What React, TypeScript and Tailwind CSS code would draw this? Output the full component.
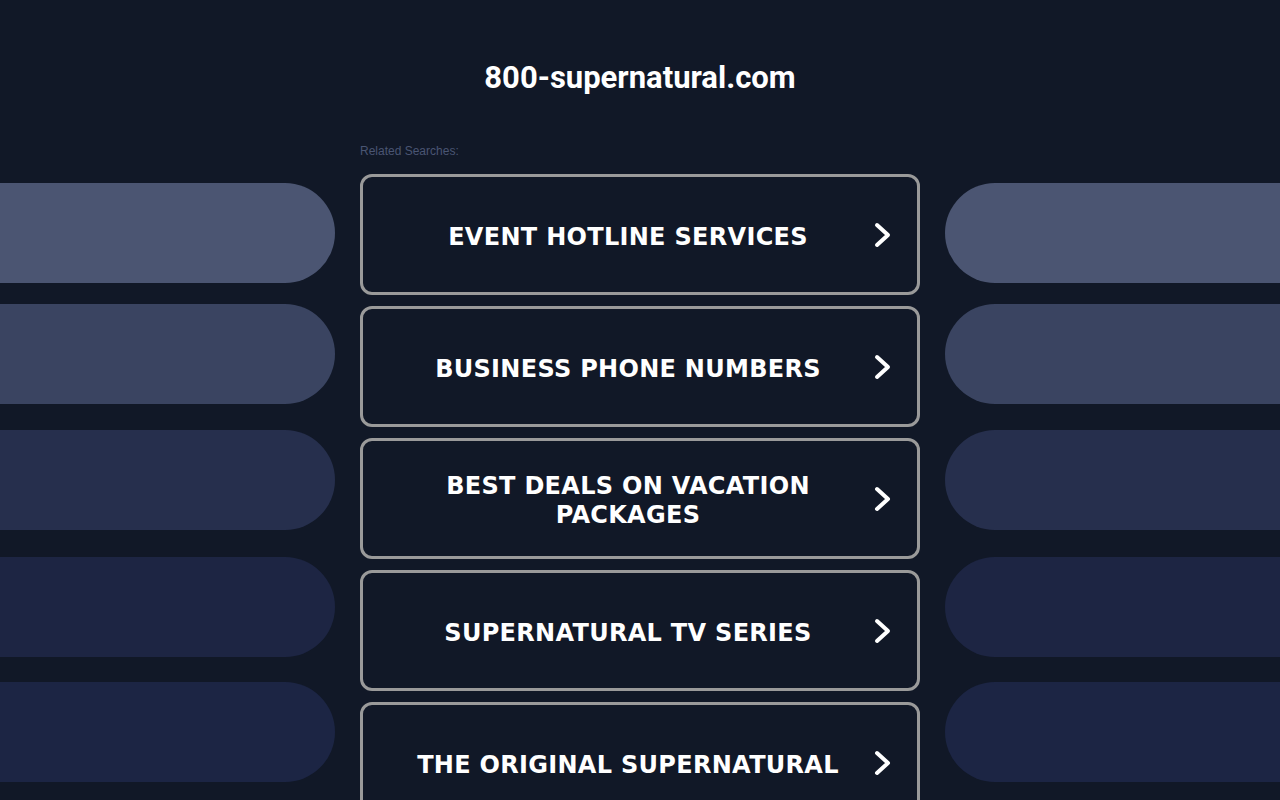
const items = [
  "EVENT HOTLINE SERVICES",
  "BUSINESS PHONE NUMBERS",
  "BEST DEALS ON VACATION PACKAGES",
  "SUPERNATURAL TV SERIES",
  "THE ORIGINAL SUPERNATURAL",
];

const pills = [
  { color: "bg-[#4b5572]", mt: "mt-0" },
  { color: "bg-[#3a4461]", mt: "mt-[21px]" },
  { color: "bg-[#262f4d]", mt: "mt-[26px]" },
  { color: "bg-[#1d2543]", mt: "mt-[27px]" },
  { color: "bg-[#1c2544]", mt: "mt-[25px]" },
];

function Chevron() {
  return (
    <svg width="20" height="28" viewBox="0 0 20 28" fill="none">
      <polyline
        points="4,4 15,14 4,24"
        stroke="white"
        strokeWidth="4"
        strokeLinecap="round"
        strokeLinejoin="round"
      />
    </svg>
  );
}

function SideColumn({ side }: { side: "left" | "right" }) {
  return (
    <div className="w-[335px] shrink-0 flex flex-col pt-[183px]">
      {pills.map((p, i) => (
        <div
          key={i}
          className={`h-[100px] ${p.color} ${p.mt} ${
            side === "left" ? "rounded-r-full" : "rounded-l-full"
          }`}
        />
      ))}
    </div>
  );
}

export default function App() {
  return (
    <main className="min-h-screen bg-[#111827] overflow-hidden font-['Liberation_Sans',Arial,sans-serif]">
      <div className="flex justify-between gap-[25px] h-[800px]">
        <SideColumn side="left" />

        <div className="w-[560px] shrink-0 flex flex-col">
          <h1 className="text-center text-white font-bold text-[31px] leading-none mt-[62px] font-['Roboto','Liberation_Sans',sans-serif]">
            800-supernatural.com
          </h1>

          <p className="text-[12px] text-[#4a5573] mt-[52px] leading-none">
            Related Searches:
          </p>

          <div className="flex flex-col gap-[11px] mt-[17px]">
            {items.map((item) => (
              <a
                key={item}
                href="#"
                className="h-[121px] shrink-0 flex items-center border-[3px] border-[#9a9a9a] rounded-[12px] pl-[30px] pr-[15px]"
              >
                <span className="flex-1 text-center text-white font-bold text-[24px] leading-[29px] px-[20px] pt-[5px] font-['DejaVu_Sans',Verdana,sans-serif] tracking-[0.3px]">
                  {item}
                </span>
                <span className="w-[39px] flex justify-center">
                  <Chevron />
                </span>
              </a>
            ))}
          </div>
        </div>

        <SideColumn side="right" />
      </div>
    </main>
  );
}
